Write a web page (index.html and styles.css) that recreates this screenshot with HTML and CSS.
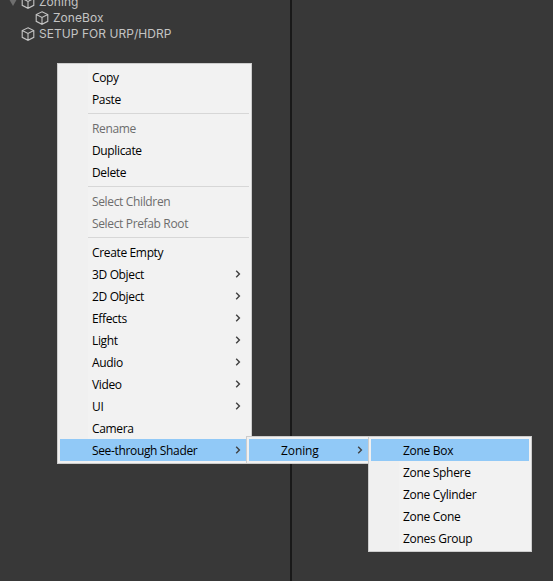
FILE: index.html
```
<!DOCTYPE html>
<html lang="en">
<head>
<meta charset="utf-8">
<title>Hierarchy</title>
<link rel="stylesheet" href="styles.css">
</head>
<body>
<svg width="0" height="0" class="defs">
  <symbol id="cube" viewBox="0 0 14 14"><path d="M7 .8 12.8 3.5V10.3L7 13.3 1.2 10.3V3.5ZM1.2 3.5 7 6.4 12.8 3.5M7 6.4V13.3"/></symbol>
  <symbol id="chev" viewBox="0 0 6 8"><path d="M1.2.8 4.4 4 1.2 7.2"/></symbol>
</svg>
<div class="editor">
  <section class="panel hierarchy">
    <div class="row"><i class="fold"></i><svg class="cube"><use href="#cube"/></svg><span>Zoning</span></div>
    <div class="row child"><svg class="cube"><use href="#cube"/></svg><span>ZoneBox</span></div>
    <div class="row"><svg class="cube"><use href="#cube"/></svg><span>SETUP FOR URP/HDRP</span></div>
  </section>
  <section class="panel scene"></section>
</div>
<nav class="menu main">
  <div class="item">Copy</div>
  <div class="item">Paste</div>
  <hr>
  <div class="item off">Rename</div>
  <div class="item">Duplicate</div>
  <div class="item">Delete</div>
  <hr>
  <div class="item off">Select Children</div>
  <div class="item off">Select Prefab Root</div>
  <hr>
  <div class="item">Create Empty</div>
  <div class="item">3D Object<svg class="chev"><use href="#chev"/></svg></div>
  <div class="item">2D Object<svg class="chev"><use href="#chev"/></svg></div>
  <div class="item">Effects<svg class="chev"><use href="#chev"/></svg></div>
  <div class="item">Light<svg class="chev"><use href="#chev"/></svg></div>
  <div class="item">Audio<svg class="chev"><use href="#chev"/></svg></div>
  <div class="item">Video<svg class="chev"><use href="#chev"/></svg></div>
  <div class="item">UI<svg class="chev"><use href="#chev"/></svg></div>
  <div class="item">Camera</div>
  <div class="item active">See-through Shader<svg class="chev"><use href="#chev"/></svg></div>
</nav>
<nav class="menu zoning">
  <div class="item active">Zoning<svg class="chev"><use href="#chev"/></svg></div>
</nav>
<nav class="menu zones">
  <div class="item active">Zone Box</div>
  <div class="item">Zone Sphere</div>
  <div class="item">Zone Cylinder</div>
  <div class="item">Zone Cone</div>
  <div class="item">Zones Group</div>
</nav>
</body>
</html>
```
FILE: styles.css
```
* { box-sizing: border-box; }
body { margin: 0; width: 553px; height: 581px; overflow: hidden; background: #383838; }
.defs { position: absolute; }
.editor { display: flex; height: 581px; }
.panel { background: #383838; overflow: hidden; }
.hierarchy { width: 292px; border-right: 2px solid #191919; font: 12px/16px Inter, sans-serif; letter-spacing: 0.05px; color: #c4c4c4; }
.scene { flex: 1; }
.row { display: flex; align-items: center; height: 16px; padding-left: 21px; position: relative; white-space: nowrap; }
.row:first-child { margin-top: -6px; }
.row.child { padding-left: 35px; }
.cube { width: 14px; height: 14px; margin-right: 4px; fill: none; stroke: #c4c4c4; stroke-width: 1.1; }
.fold { position: absolute; left: 9px; top: 5px; border: 4.5px solid transparent; border-top: 7px solid #6e6e6e; border-bottom: 0; }
.menu { position: absolute; border: 1px solid #ccc; padding: 2px; background: linear-gradient(90deg, #f0f0f0 30px, #f2f2f2 30px); font: 12px/22px "Open Sans", sans-serif; color: #000; }
.main { left: 57px; top: 63px; width: 195px; letter-spacing: -0.35px; }
.zoning { left: 246px; top: 436px; width: 125px; letter-spacing: -0.1px; }
.zones { left: 368px; top: 436px; width: 164px; letter-spacing: -0.3px; }
.item { display: flex; align-items: center; justify-content: space-between; height: 22px; padding: 1px 8px 0 32px; white-space: nowrap; }
.zoning .item { padding-right: 5px; }
.off { color: #6d6d6d; }
.active { background: #91c9f7; }
.chev { width: 6px; height: 8px; margin-top: -1px; fill: none; stroke: #404040; stroke-width: 1.4; }
hr { height: 1px; margin: 3px 0 3px 28px; border: 0; background: #d7d7d7; }
```
